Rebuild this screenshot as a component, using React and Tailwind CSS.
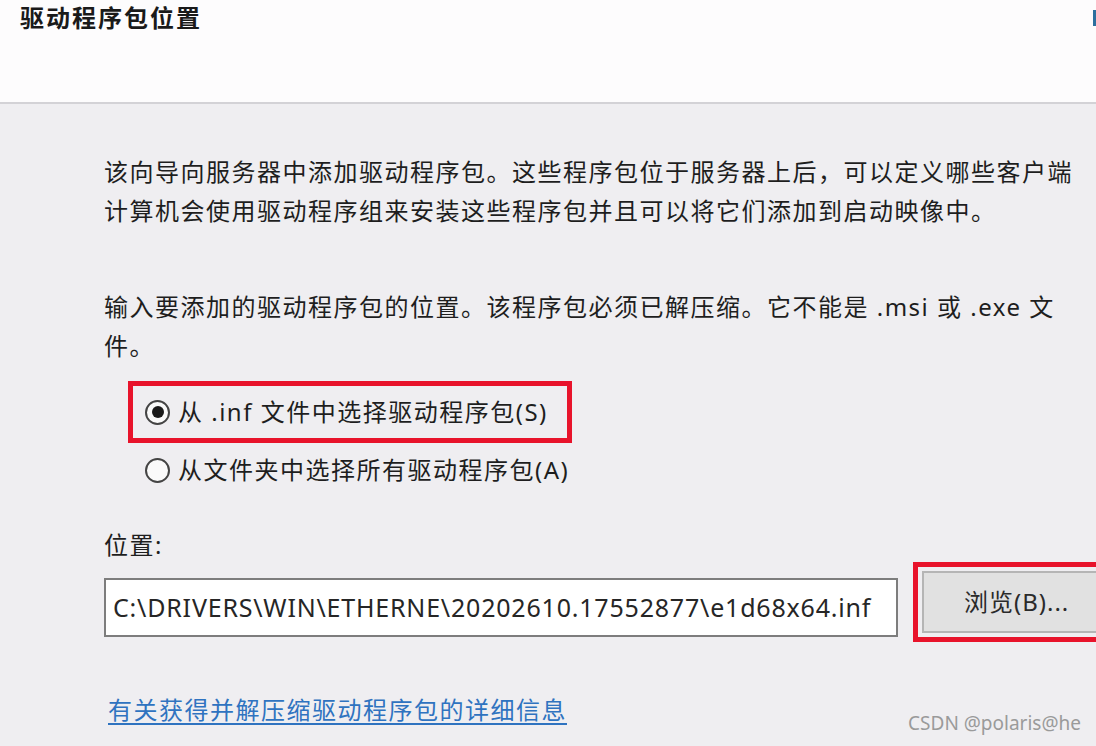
import React from "react";

const FONT = { fontFamily: '"Noto Sans", "Noto Sans CJK SC", sans-serif' };

function Radio({ checked }) {
  return (
    <span className="relative inline-flex h-[25px] w-[25px] shrink-0 items-center justify-center rounded-full border-2 border-[#444] bg-[#fafafa]">
      {checked && <span className="h-[12px] w-[12px] rounded-full bg-[#1a1a1a]" />}
    </span>
  );
}

export default function App() {
  return (
    <div
      className="relative h-[746px] w-[1096px] overflow-hidden bg-[#efeef1] text-[#1e1e1e]"
      style={FONT}
    >
      <header className="relative h-[104px] border-b-2 border-[#d3d2d6] bg-[#fdfcfd]">
        <h1 className="pl-[20px] pt-[3px] text-[24px] font-bold leading-[30px] tracking-[2px] text-[#1a1a1a]">
          驱动程序包位置
        </h1>
        <div className="absolute right-0 top-[10px] h-[16px] w-[3px] bg-[#2c6f9e]" />
      </header>

      <main className="pl-[104px] pt-[48px] text-[24px] tracking-[1.5px]">
        <div className="leading-[39px] whitespace-nowrap">
          <div>该向导向服务器中添加驱动程序包。这些程序包位于服务器上后，可以定义哪些客户端</div>
          <div>计算机会使用驱动程序组来安装这些程序包并且可以将它们添加到启动映像中。</div>
        </div>

        <div className="mt-[57px] leading-[39px] whitespace-nowrap">
          <div>输入要添加的驱动程序包的位置。该程序包必须已解压缩。它不能是 .msi 或 .exe 文</div>
          <div>件。</div>
        </div>

        <div className="ml-[24px] mt-[16px] flex h-[62px] w-[444px] items-center gap-[8px] border-[5px] border-[#e8132b] pl-[12px] whitespace-nowrap">
          <Radio checked />
          <span className="leading-[30px]">从 .inf 文件中选择驱动程序包(S)</span>
        </div>

        <div className="ml-[41px] mt-[7px] flex h-[40px] items-center gap-[8px] whitespace-nowrap">
          <Radio />
          <span className="leading-[30px]">从文件夹中选择所有驱动程序包(A)</span>
        </div>

        <div className="mt-[38px] leading-[34px]">位置:</div>

        <div className="flex items-start gap-[15px]">
          <div className="mt-[16px] flex h-[59px] w-[794px] shrink-0 items-center border-2 border-[#7d7d7d] bg-white pl-[7px] text-[25px] tracking-[0.8px] whitespace-nowrap text-[#262626]">
            C:\DRIVERS\WIN\ETHERNE\20202610.17552877\e1d68x64.inf
          </div>
          <div className="w-[220px] shrink-0 border-[5px] border-[#e8132b] p-[4px]">
            <button className="flex h-[62px] w-full items-center border-2 border-[#b5b5b5] bg-[#e1e1e1] pl-[40px] text-[24px] tracking-[1px] text-[#2a2a2a]">
              浏览(B)...
            </button>
          </div>
        </div>

        <div className="ml-[4px] mt-[51px] leading-[34px]">
          <a href="#" className="text-[#2f73c0] underline decoration-[#2f73c0] underline-offset-[4px]">
            有关获得并解压缩驱动程序包的详细信息
          </a>
        </div>
      </main>

      <div className="absolute bottom-[9px] right-[15px] text-[19px] text-[#9a9a9a]">
        CSDN @polaris@he
      </div>
    </div>
  );
}
